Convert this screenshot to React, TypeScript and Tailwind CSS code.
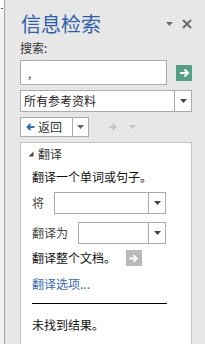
import React from 'react';

const Caret = ({ color = '#444' }: { color?: string }) => (
    <svg width="7" height="4" viewBox="0 0 7 4">
        <polygon points="0,0 7,0 3.5,4" fill={color} />
    </svg>
);

const Combo = ({ width, text }: { width: string; text?: string }) => (
    <div className={`${width} h-[22px] flex bg-white border border-[#ababab]`}>
        <div className="flex-1 flex items-center pl-[3px] text-[12px] leading-[16px] text-[#222]">{text}</div>
        <div className="w-[17px] flex items-center justify-center border-l border-[#ababab]">
            <Caret />
        </div>
    </div>
);

const App: React.FC = () => {
    return (
        <div className="w-[205px] h-[344px] flex overflow-hidden bg-[#e7e7e7] font-['Noto_Sans_CJK_SC',sans-serif]">
            {/* left edge of the document */}
            <div className="w-[5px] flex flex-col bg-[#f2f2f2] border-r border-[#a3a3a3]">
                <div className="h-[12px] bg-white flex items-end pl-[1px] pb-[3px]">
                    <div className="w-[2px] h-[1px] bg-[#555]" />
                </div>
            </div>

            <div className="flex-1 flex flex-col pl-[15px] pr-[13px]">
                {/* title */}
                <div className="mt-[12px] h-[24px] flex items-center justify-between">
                    <span className="text-[20px] leading-[24px] text-[#2f5fa8] pl-[1px]">信息检索</span>
                    <div className="flex items-center gap-[9px] pr-[0px]">
                        <Caret color="#6a6a6a" />
                        <svg width="10" height="10" viewBox="0 0 10 10">
                            <path d="M1 1L9 9M9 1L1 9" stroke="#6a6a6a" strokeWidth="2" />
                        </svg>
                    </div>
                </div>

                <div className="mt-[4px] text-[12px] leading-[16px] text-[#333]">搜索:</div>

                {/* search box */}
                <div className="mt-[4px] flex items-center">
                    <div className="w-[147px] h-[25px] bg-white border border-[#ababab] flex items-center pl-[7px] text-[12px] text-[#333]">
                        ,
                    </div>
                    <div className="ml-[9px] w-[16px] h-[16px] bg-[#55a083] flex items-center justify-center">
                        <svg width="11" height="10" viewBox="0 0 11 10">
                            <path d="M1 5h7.5M5.5 1.5L9 5L5.5 8.5" stroke="white" strokeWidth="2" fill="none" />
                        </svg>
                    </div>
                </div>

                <div className="mt-[5px]">
                    <Combo width="w-full" text="所有参考资料" />
                </div>

                {/* back / forward */}
                <div className="mt-[5px] h-[20px] flex">
                    <div className="flex bg-white border border-[#ababab]">
                        <div className="w-[51px] flex items-center pl-[5px] gap-[3px]">
                            <svg width="9" height="8" viewBox="0 0 9 8">
                                <path d="M8.5 4H2M4.5 1L1.5 4L4.5 7" stroke="#2f6db5" strokeWidth="1.8" fill="none" />
                            </svg>
                            <span className="text-[12px] leading-[16px] text-[#333]">返回</span>
                        </div>
                        <div className="w-[16px] flex items-center justify-center border-l border-[#ababab]">
                            <Caret color="#666" />
                        </div>
                    </div>
                    <div className="ml-[11px] w-[41px] flex items-center">
                        <div className="w-[24px] flex items-center justify-center pl-[2px]">
                            <svg width="8" height="8" viewBox="0 0 8 8">
                                <path d="M0 4h6M3.5 1L6.5 4L3.5 7" stroke="#bdbdbd" strokeWidth="1.6" fill="none" />
                            </svg>
                        </div>
                        <div className="flex-1 flex items-center justify-center">
                            <Caret color="#c4c4c4" />
                        </div>
                    </div>
                </div>

                {/* results panel */}
                <div className="mt-[5px] flex-1 bg-white border border-[#c3c3c3] border-b-0 flex flex-col pl-[11px] text-[12px] leading-[16px] text-[#222]">
                    <div className="mt-[3px] flex items-center">
                        <svg width="6" height="6" viewBox="0 0 6 6" className="ml-[-4px]">
                            <polygon points="5.5,0.5 5.5,5.5 0.5,5.5" fill="#444" />
                        </svg>
                        <span className="ml-[4px] text-[#333]">翻译</span>
                    </div>

                    <div className="mt-[7px] text-[#111]">翻译一个单词或句子。</div>

                    <div className="mt-[7px] flex items-center">
                        <span className="w-[22px] text-[#444]">将</span>
                        <Combo width="w-[112px]" />
                    </div>

                    <div className="mt-[8px] flex items-center">
                        <span className="w-[46px] text-[#444]">翻译为</span>
                        <Combo width="w-[88px]" />
                    </div>

                    <div className="mt-[6px] h-[16px] flex items-center">
                        <span className="text-[#111]">翻译整个文档。</span>
                        <div className="ml-[10px] w-[16px] h-[16px] bg-[#b9b9b9] flex items-center justify-center">
                            <svg width="10" height="9" viewBox="0 0 10 9">
                                <path d="M0.5 4.5h7M4.5 1.2L7.8 4.5L4.5 7.8" stroke="white" strokeWidth="1.8" fill="none" />
                            </svg>
                        </div>
                    </div>

                    <div className="mt-[10px] text-[#3a6aac]">翻译选项...</div>

                    <div className="mt-[11px] w-[135px] h-[1px] bg-black" />

                    <div className="mt-[13px] text-[#111]">未找到结果。</div>
                </div>
            </div>
        </div>
    );
};

export default App;
